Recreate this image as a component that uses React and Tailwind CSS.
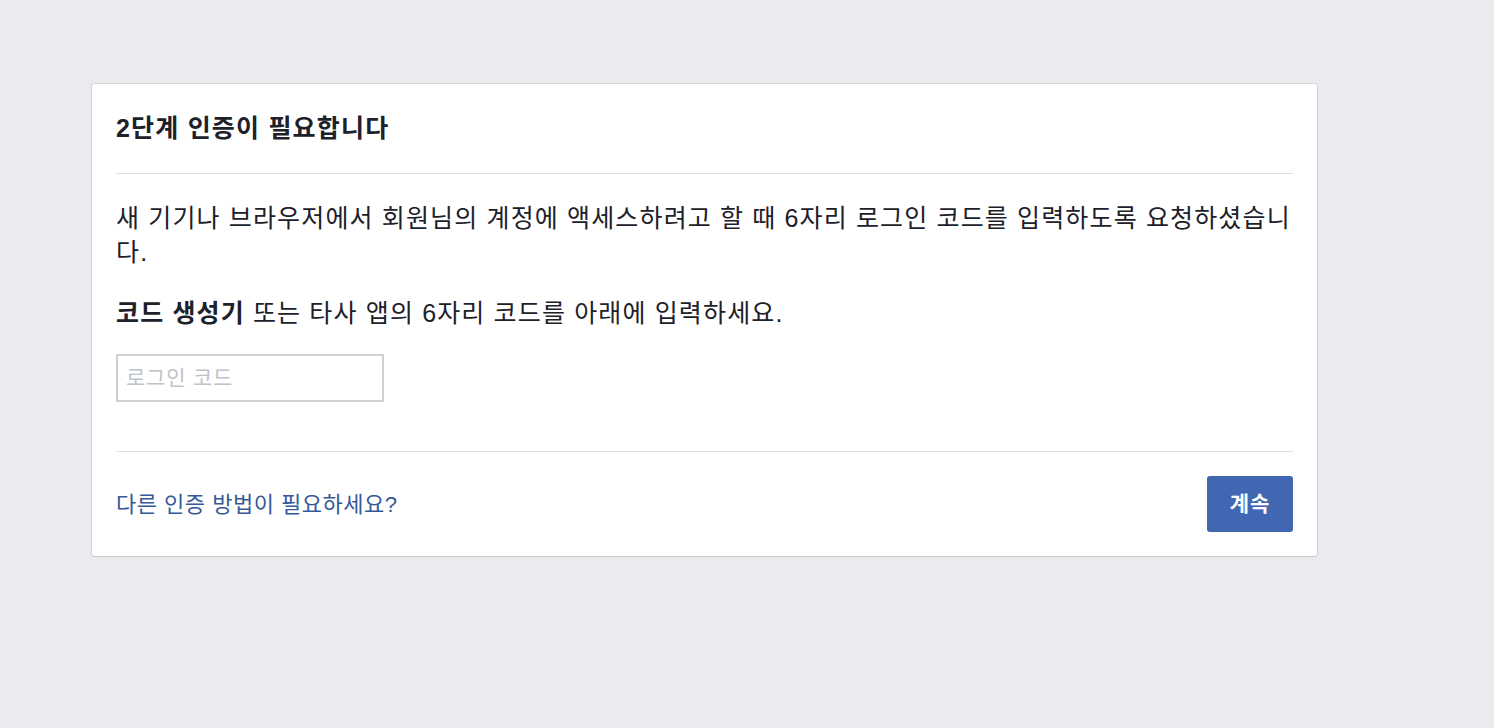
import React, { useState } from 'react';

const font = { fontFamily: '"Liberation Sans", "Noto Sans CJK KR", sans-serif' };

export default function App() {
  const [code, setCode] = useState('');

  return (
    <div className="min-h-screen bg-[#e9ebee] pt-[83px] pl-[91px] text-[#1d2129] font-['Liberation_Sans','Noto_Sans_CJK_KR',sans-serif]">
      <div className="w-[1227px] bg-white border-[1.5px] border-t-[#d8d9dd] border-x-[#d0d1d5] border-b-[#c6c7cb] rounded-[4px]">
        {/* Header */}
        <div className="px-6">
          <h2 className="py-[30px] text-[25px] leading-[29px] tracking-[1.2px] font-bold border-b-[1.5px] border-[#dddfe2]">
            2단계 인증이 필요합니다
          </h2>
        </div>

        {/* Body */}
        <div className="px-6 pt-[27px] pb-[49px]">
          <p className="text-[25px] leading-[34px] tracking-[1.15px]">
            새 기기나 브라우저에서 회원님의 계정에 액세스하려고 할 때 6자리 로그인 코드를 입력하도록 요청하셨습니다.
          </p>
          <p className="mt-[27px] text-[25px] leading-[34px] tracking-[1.15px]">
            <strong className="font-bold">코드 생성기</strong> 또는 타사 앱의 6자리 코드를 아래에 입력하세요.
          </p>
          <input
            type="text"
            autoFocus
            value={code}
            onChange={(e) => setCode(e.target.value)}
            placeholder="로그인 코드"
            className="mt-[24px] block w-[268px] h-[48px] px-[8px] border-[2px] border-[#ccd0d5] text-[21px] tracking-[0.8px] outline-none caret-[#1d2129] placeholder:text-[#bec3c9]"
            style={font}
          />
        </div>

        {/* Footer */}
        <div className="px-6">
          <div className="flex items-center justify-between border-t-[1.5px] border-[#dddfe2] py-[24px]">
            <a href="#" className="text-[22px] tracking-[0.5px] text-[#365899]">
              다른 인증 방법이 필요하세요?
            </a>
            <button className="w-[86px] h-[56px] rounded-[3px] bg-[#4267b2] text-white text-[21px] tracking-[1px] font-bold">
              계속
            </button>
          </div>
        </div>
      </div>
    </div>
  );
}
